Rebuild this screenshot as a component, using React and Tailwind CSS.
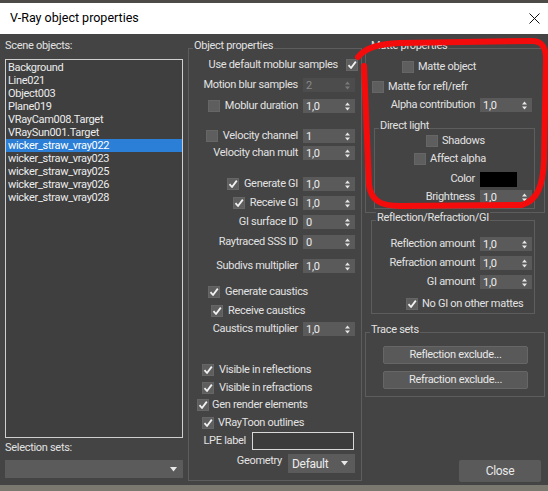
import React from 'react';

const Check = ({ checked = false }) => (
  <span className="inline-flex h-[12px] w-[12px] shrink-0 items-center justify-center bg-[#5e5e5e] border border-[#666]">
    {checked && (
      <svg width="10" height="10" viewBox="0 0 10 10">
        <path d="M1.5 5.2 L4 8 L8.8 1.6" fill="none" stroke="#f2f2f2" strokeWidth="1.8" strokeLinejoin="round" />
      </svg>
    )}
  </span>
);

const Arrows = ({ color = '#e6e6e6' }) => (
  <svg width="5" height="9" viewBox="0 0 5 9">
    <path d="M0 3.5 L2.5 0.5 L5 3.5 Z M0 5.5 L2.5 8.5 L5 5.5 Z" fill={color} />
  </svg>
);

const Spinner = ({ value, disabled = false }) => (
  <div
    className={`flex h-[14px] w-[52px] shrink-0 items-center justify-between pl-[3px] pr-[5px] ${
      disabled ? 'bg-[#4c4c4c] text-[#8a8a8a]' : 'bg-[#5a5a5a] text-[#ececec]'
    }`}
  >
    <span className="leading-none">{value}</span>
    <Arrows color={disabled ? '#7a7a7a' : '#e6e6e6'} />
  </div>
);

const DropArrow = () => (
  <svg width="7" height="5" viewBox="0 0 7 5">
    <path d="M0 0 L7 0 L3.5 4.5 Z" fill="#e8e8e8" />
  </svg>
);

// group box, title sits on the top line
const Group = ({ title, className = '', children }) => (
  <div className={`border border-[#5d5d5d] ${className}`}>
    {title && (
      <div className="-mt-[10px] ml-[4px] h-[14px] w-fit bg-[#444444] px-[1px] leading-[14px] text-[#e2e2e2]">
        {title}
      </div>
    )}
    {children}
  </div>
);

const SpinRow = ({ label, value, className = '', pr = 'pr-[6px]', disabled }) => (
  <div className={`flex h-[16px] items-center justify-end gap-[5px] ${pr} ${className}`}>
    <span>{label}</span>
    <Spinner value={value} disabled={disabled} />
  </div>
);

const objects = [
  'Background',
  'Line021',
  'Object003',
  'Plane019',
  'VRayCam008.Target',
  'VRaySun001.Target',
  'wicker_straw_vray022',
  'wicker_straw_vray023',
  'wicker_straw_vray025',
  'wicker_straw_vray026',
  'wicker_straw_vray028',
];

export default function App() {
  return (
    <div className="relative flex h-[491px] w-[548px] flex-col overflow-hidden whitespace-nowrap bg-[#6f6c66] font-['Roboto','Noto_Sans',sans-serif] text-[11px] tracking-[-0.3px] text-[#e2e2e2]">
      <div className="h-[3px] bg-[#4d4b47]" />

      {/* title bar */}
      <div className="flex h-[31px] items-center justify-between bg-white pl-[10px] pr-[8px] text-[12.5px] tracking-normal text-black">
        <span>V-Ray object properties</span>
        <svg width="11" height="11" viewBox="0 0 11 11">
          <path d="M0.5 0.5 L10.5 10.5 M10.5 0.5 L0.5 10.5" stroke="#111" strokeWidth="1" />
        </svg>
      </div>

      {/* body */}
      <div className="flex h-[451px] bg-[#444444]">
        {/* scene objects */}
        <div className="flex w-[188px] flex-col pl-[5px] pr-[5px] pt-[5px]">
          <div className="h-[14px] leading-[14px]">Scene objects:</div>
          <div className="mt-[6px] h-[379px] border border-[#cfcfcf] bg-[#3f3f3f] pt-[1px]">
            {objects.map((o, i) => (
              <div
                key={o}
                className={`h-[13px] pl-[2px] leading-[13px] ${i === 6 ? 'bg-[#2b7fd6] text-white' : 'text-[#ececec]'}`}
              >
                {o}
              </div>
            ))}
          </div>
          <div className="mt-[3px] h-[14px] leading-[14px]">Selection sets:</div>
          <div className="mt-[5px] flex h-[18px] items-center justify-end bg-[#5b5b5b] pr-[6px]">
            <DropArrow />
          </div>
        </div>

        {/* object properties */}
        <Group title="Object properties" className="mt-[14px] h-[433px] w-[174px]">
          <div className="mt-[4px] flex h-[16px] items-center justify-end gap-[8px] pr-[3px]">
            <span>Use default moblur samples</span>
            <Check checked />
          </div>
          <SpinRow className="mt-[4px]" label="Motion blur samples" value="2" disabled />
          <div className="mt-[5px] flex h-[16px] items-center justify-end gap-[5px] pr-[6px]">
            <Check />
            <span>Moblur duration</span>
            <Spinner value="1,0" />
          </div>
          <div className="mt-[14px] flex h-[16px] items-center justify-end gap-[5px] pr-[6px]">
            <Check />
            <span>Velocity channel</span>
            <Spinner value="1" />
          </div>
          <SpinRow className="mt-[1px]" label="Velocity chan mult" value="1,0" />
          <div className="mt-[15px] flex h-[16px] items-center justify-end gap-[5px] pr-[6px]">
            <Check checked />
            <span>Generate GI</span>
            <Spinner value="1,0" />
          </div>
          <div className="mt-[3px] flex h-[16px] items-center justify-end gap-[5px] pr-[6px]">
            <Check checked />
            <span>Receive GI</span>
            <Spinner value="1,0" />
          </div>
          <SpinRow className="mt-[3px]" label="GI surface ID" value="0" />
          <SpinRow className="mt-[4px]" label="Raytraced SSS ID" value="0" />
          <SpinRow className="mt-[8px]" label="Subdivs multiplier" value="1,0" />
          <div className="mt-[10px] flex h-[16px] items-center gap-[5px] pl-[19px]">
            <Check checked />
            <span>Generate caustics</span>
          </div>
          <div className="mt-[3px] flex h-[16px] items-center gap-[5px] pl-[22px]">
            <Check checked />
            <span>Receive caustics</span>
          </div>
          <SpinRow className="mt-[2px]" label="Caustics multiplier" value="1,0" />
          <div className="mt-[25px] flex h-[16px] items-center gap-[5px] pl-[13px]">
            <Check checked />
            <span>Visible in reflections</span>
          </div>
          <div className="mt-[2px] flex h-[16px] items-center gap-[5px] pl-[13px]">
            <Check checked />
            <span>Visible in refractions</span>
          </div>
          <div className="mt-[1px] flex h-[16px] items-center gap-[3px] pl-[8px]">
            <Check checked />
            <span>Gen render elements</span>
          </div>
          <div className="mt-[2px] flex h-[16px] items-center gap-[4px] pl-[13px]">
            <Check checked />
            <span>VRayToon outlines</span>
          </div>
          <div className="mt-[1px] flex h-[18px] items-center justify-end gap-[6px] pr-[7px]">
            <span>LPE label</span>
            <div className="h-[18px] w-[102px] border border-[#d8d8d8] bg-[#3c3c3c]" />
          </div>
          <div className="mt-[4px] flex h-[19px] items-center justify-end gap-[6px] pr-[6px]">
            <span className="-mt-[4px]">Geometry</span>
            <div className="flex h-[19px] w-[67px] items-center justify-between bg-[#5b5b5b] pl-[4px] pr-[7px] text-[12px] text-[#ececec]">
              <span>Default</span>
              <DropArrow />
            </div>
          </div>
        </Group>

        {/* right column */}
        <div className="flex flex-1 flex-col pl-[3px] pr-[3px]">
          <Group title="Matte properties" className="mt-[14px] pb-[3px]">
            <div className="mt-[6px] flex h-[16px] items-center gap-[4px] pl-[36px]">
              <Check />
              <span>Matte object</span>
            </div>
            <div className="mt-[4px] flex h-[16px] items-center gap-[4px] pl-[6px]">
              <Check />
              <span>Matte for refl/refr</span>
            </div>
            <SpinRow className="mt-[2px]" pr="pr-[12px]" label="Alpha contribution" value="1,0" />
            <Group title="Direct light" className="ml-[8px] mr-[9px] mt-[15px] pb-[3px]">
              <div className="flex h-[16px] items-center gap-[4px] pl-[51px]">
                <Check />
                <span>Shadows</span>
              </div>
              <div className="mt-[2px] flex h-[16px] items-center gap-[4px] pl-[39px]">
                <Check />
                <span>Affect alpha</span>
              </div>
              <div className="mt-[4px] flex h-[16px] items-center justify-end gap-[5px] pr-[17px]">
                <span>Color</span>
                <div className="h-[15px] w-[37px] bg-black" />
              </div>
              <SpinRow className="mt-[2px]" pr="pr-[2px]" label="Brightness" value="1,0" />
            </Group>
          </Group>

          <Group title="Reflection/Refraction/GI" className="ml-[6px] mr-[10px] mt-[7px] pb-[1px]">
            <SpinRow className="mt-[11px]" pr="pr-[2px]" label="Reflection amount" value="1,0" />
            <SpinRow className="mt-[3px]" pr="pr-[2px]" label="Refraction amount" value="1,0" />
            <SpinRow className="mt-[3px]" pr="pr-[2px]" label="GI amount" value="1,0" />
            <div className="mt-[6px] flex h-[16px] items-center gap-[4px] pl-[34px]">
              <Check checked />
              <span>No GI on other mattes</span>
            </div>
          </Group>

          <Group title="Trace sets" className="mt-[18px] pb-[7px]">
            <button className="ml-[17px] mt-[9px] flex h-[18px] w-[145px] items-center justify-center rounded-[2px] border border-[#666] bg-[#595959] text-[11px] text-[#e8e8e8]">
              Reflection exclude...
            </button>
            <button className="ml-[17px] mt-[7px] flex h-[18px] w-[145px] items-center justify-center rounded-[2px] border border-[#666] bg-[#595959] text-[11px] text-[#e8e8e8]">
              Refraction exclude...
            </button>
          </Group>

          <button className="mb-[3px] ml-auto mr-[4px] mt-auto flex h-[22px] w-[82px] items-center justify-center rounded-[2px] bg-[#5a5a5a] text-[12px] text-[#e8e8e8]">
            Close
          </button>
        </div>
      </div>

      <div className="h-[6px] bg-[#7b7870]" />

      {/* red hand-drawn annotation */}
      <svg className="pointer-events-none absolute left-0 top-0" width="548" height="491" viewBox="0 0 548 491">
        <path
          d="M358 57 C366 47 380 44 400 43 L532 41 C543 41 546 48 546 60 L544 160 C543 185 538 200 522 205 L400 206 C380 206 371 200 369 185 L364 66"
          fill="none"
          stroke="#f40c0c"
          strokeWidth="6"
          strokeLinecap="round"
          strokeLinejoin="round"
        />
      </svg>
    </div>
  );
}
